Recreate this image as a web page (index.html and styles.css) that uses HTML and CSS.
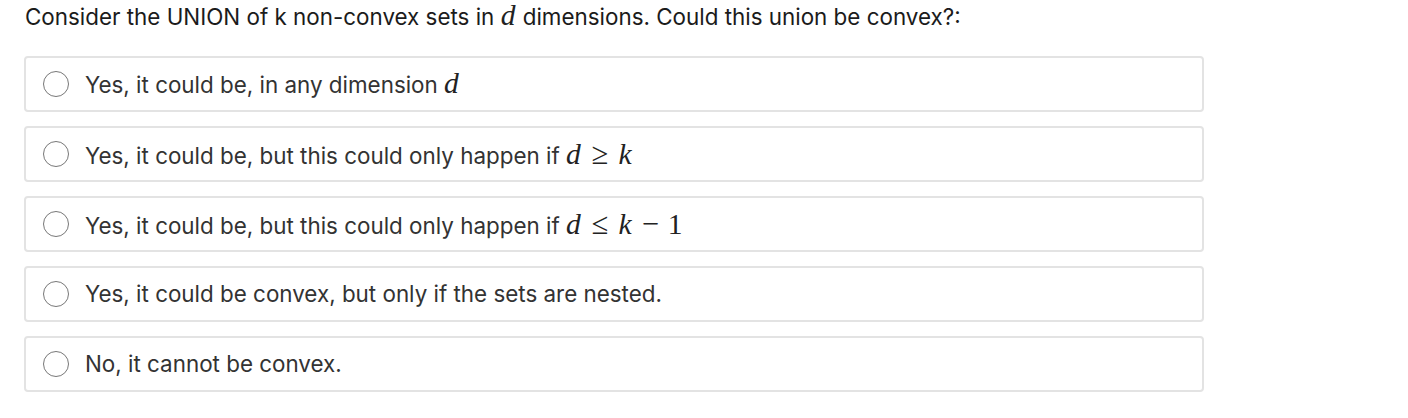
FILE: index.html
```html
<!DOCTYPE html>
<html>
<head>
<meta charset="utf-8">
<link rel="stylesheet" href="styles.css">
</head>
<body>
<div class="question">
  <p class="prompt">Consider the UNION of k non-convex sets in <span class="m">d</span> dimensions. Could this union be convex?:</p>
  <div class="options">
    <label class="option"><span class="radio"></span><span class="text">Yes, it could be, in any dimension <span class="m">d</span></span></label>
    <label class="option"><span class="radio"></span><span class="text">Yes, it could be, but this could only happen if <span class="m">d</span><span class="rel">≥</span><span class="m">k</span></span></label>
    <label class="option"><span class="radio"></span><span class="text">Yes, it could be, but this could only happen if <span class="m">d</span><span class="rel">≤</span><span class="m">k</span><span class="bin">−</span><span class="num">1</span></span></label>
    <label class="option"><span class="radio"></span><span class="text">Yes, it could be convex, but only if the sets are nested.</span></label>
    <label class="option"><span class="radio"></span><span class="text">No, it cannot be convex.</span></label>
  </div>
</div>
</body>
</html>
```
FILE: styles.css
```css
html, body {
  margin: 0;
  padding: 0;
  background: #ffffff;
}
body {
  font-family: Inter, "Liberation Sans", sans-serif;
}
.question {
  padding: 1px 0 0 24px;
  width: 1180px;
}
.prompt {
  margin: 0 0 0 1px;
  font-size: 22.4px;
  line-height: 28px;
  color: #1b1b1b;
}
.options {
  margin-top: 25px;
  display: flex;
  flex-direction: column;
  gap: 14px;
}
.option {
  display: flex;
  align-items: center;
  height: 56px;
  box-sizing: border-box;
  border: 2px solid #e3e3e3;
  border-radius: 4px;
  padding-left: 17px;
}
.radio {
  width: 26px;
  height: 26px;
  box-sizing: border-box;
  border: 1.5px solid #777;
  border-radius: 50%;
  flex: none;
}
.text {
  margin-left: 16px;
  font-size: 22.4px;
  line-height: 28px;
  color: #333333;
  white-space: nowrap;
}
.m {
  font-family: "Liberation Serif", serif;
  font-style: italic;
  font-size: 1.32em;
  line-height: 1;
  padding-right: 1px;
  color: #222;
}
.num {
  font-family: "Liberation Serif", serif;
  font-size: 1.32em;
  line-height: 1;
  color: #222;
}
.rel {
  font-family: "Liberation Serif", serif;
  font-size: 1.36em;
  line-height: 1;
  margin: 0 10px 0 10px;
  color: #222;
}
.bin {
  font-family: "Liberation Serif", serif;
  font-size: 1.36em;
  line-height: 1;
  margin: 0 9px;
  color: #222;
}
```
